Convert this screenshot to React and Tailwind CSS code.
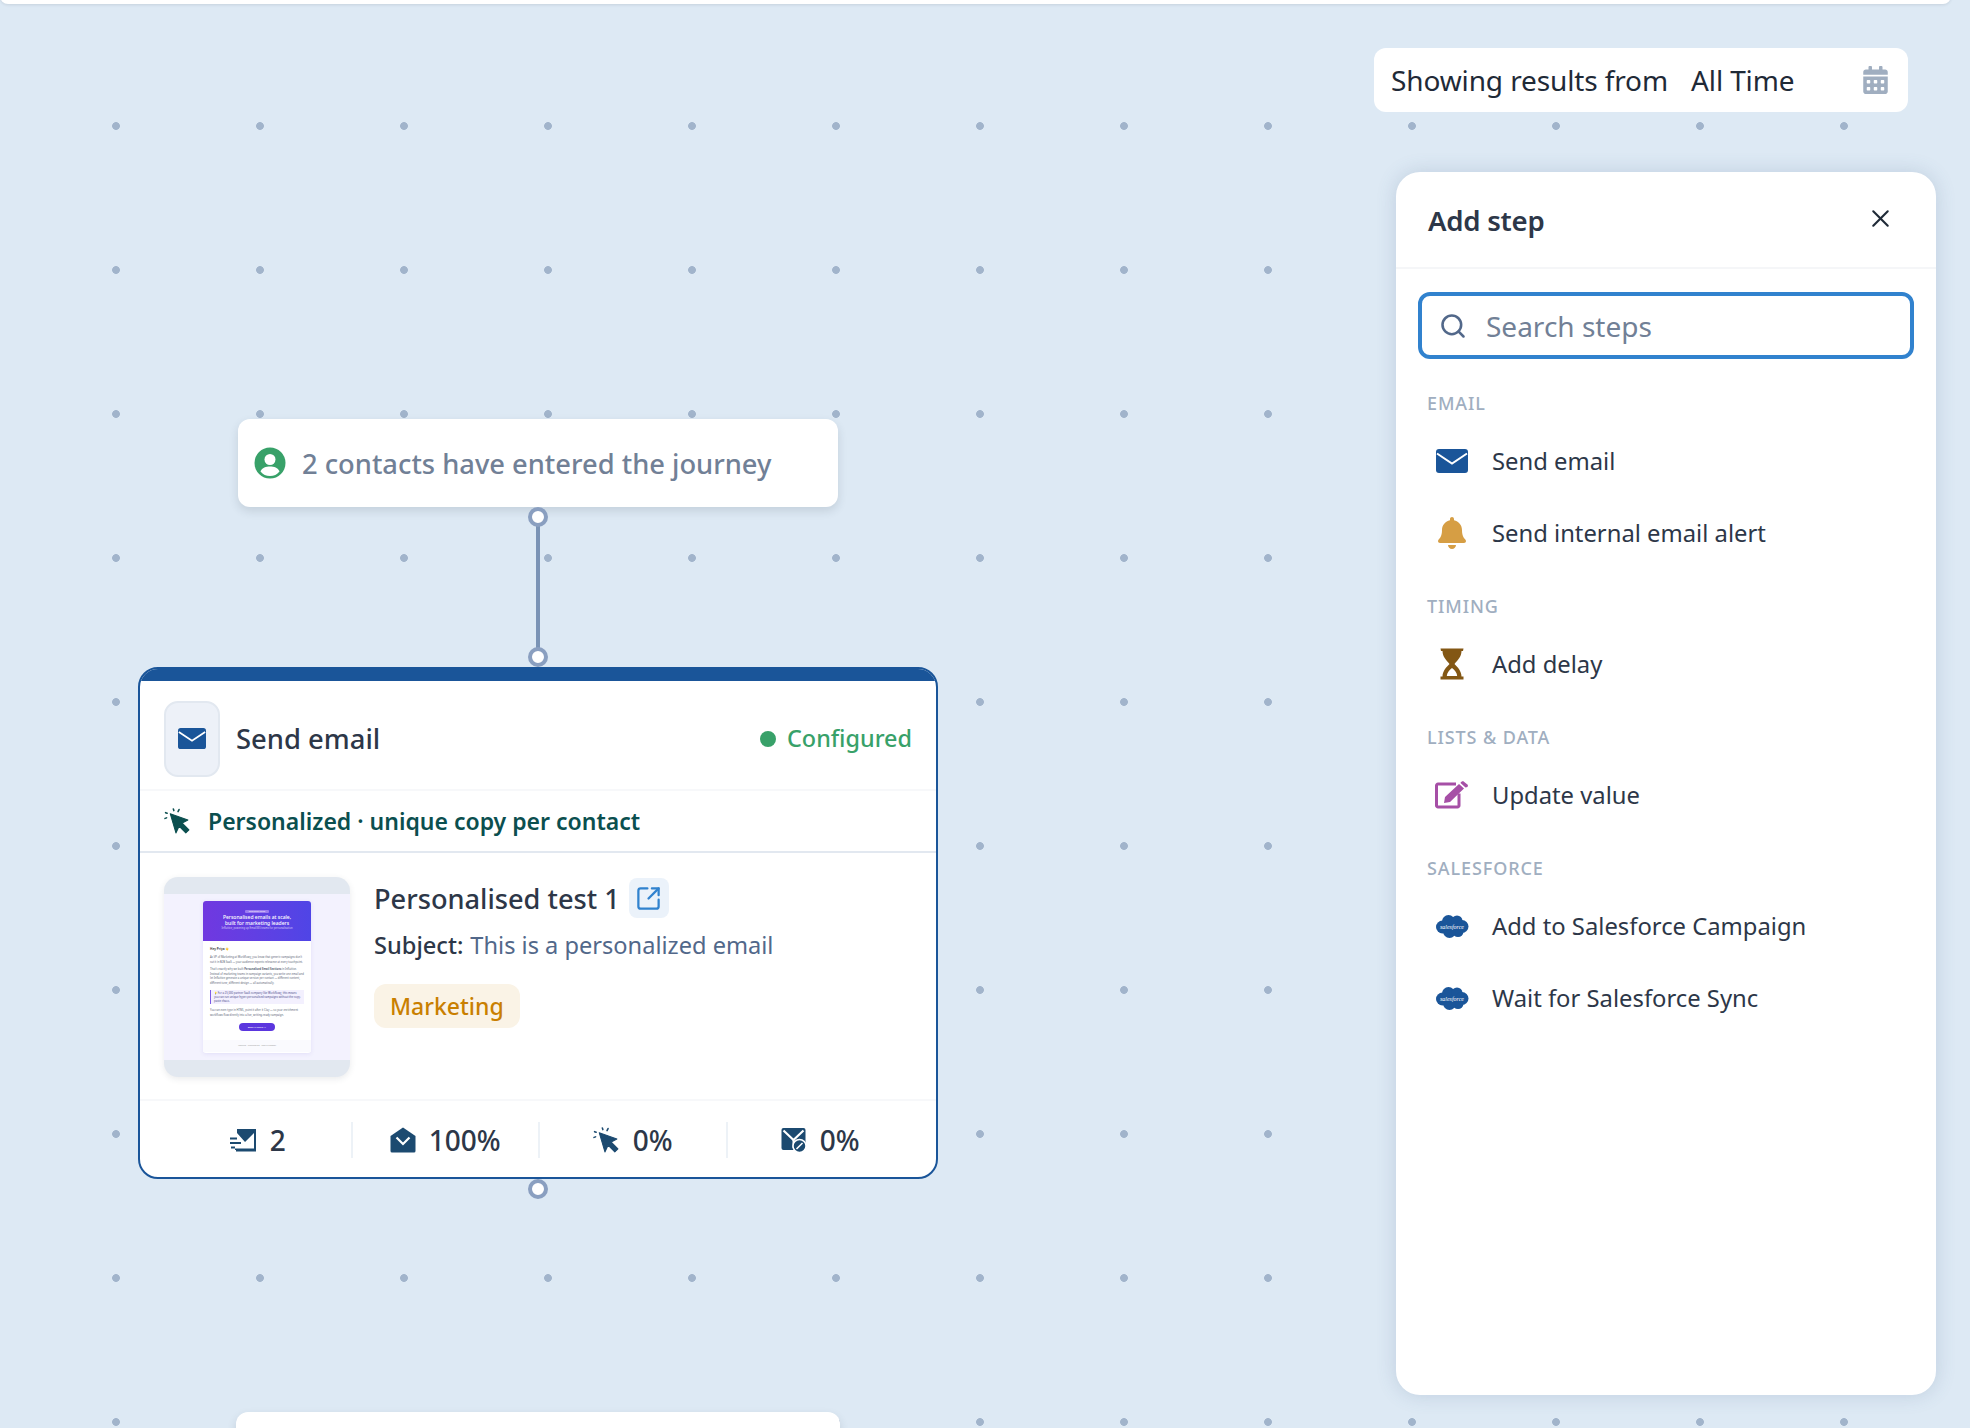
import React from "react";
import { FaCalendarAlt, FaBell } from "react-icons/fa";
import { Search, X, SquareArrowOutUpRight } from "lucide-react";

const Envelope = ({ className }) => (
  <svg viewBox="0 0 32 24" className={className}>
    <rect x="0" y="0" width="32" height="24" rx="3" fill="#1a5599" />
    <path d="M1 4.5 L16 14.5 L31 4.5" fill="none" stroke="#fff" strokeWidth="2" />
  </svg>
);

const Hourglass = ({ className }) => (
  <svg viewBox="0 0 24 32" className={className}>
    <path d="M0.5 0.5 H23.5 L23 3 L21.5 3 C21.5 9 17.5 12 14.5 16 C17.5 19 21.5 23 21.5 28.5 L23.5 28.5 V31.5 H0.5 V28.5 L2.5 28.5 C2.5 23 6.5 19 9.5 16 C6.5 12 2.5 9 2.5 3 L1 3 Z M12 20 C9 22 7 25 6.8 28 H17.2 C17 25 15 22 12 20 Z" fill="#835714" fillRule="evenodd" />
  </svg>
);

const EditIcon = ({ className }) => (
  <svg viewBox="0 0 34 28" className={className}>
    <path d="M24 13 V25 a1.5 1.5 0 0 1 -1.5 1.5 H3 A1.5 1.5 0 0 1 1.5 25 V5 A1.5 1.5 0 0 1 3 3.5 H21" fill="none" stroke="#a64fa6" strokeWidth="3" strokeLinejoin="round" transform="translate(0 -0.5)" />
    <path d="M9 22 L10 16 L24 3 L29 7.5 L15 21 Z M26 1 L28 0 L33 4 L32.5 6 L30.5 6.5 L25.5 2 Z" fill="#a64fa6" />
  </svg>
);

const Cloud = ({ className }) => (
  <svg viewBox="0 0 34 25" className={className}>
    <g fill="#1a5599">
      <rect x="6" y="7" width="22" height="12" />
      <circle cx="7.5" cy="13" r="6.5" />
      <circle cx="13.5" cy="7.5" r="6.5" />
      <circle cx="22" cy="7" r="5.5" />
      <circle cx="27" cy="12.5" r="6.5" />
      <circle cx="23" cy="17.5" r="5.5" />
      <circle cx="14.5" cy="17.5" r="6.5" />
    </g>
    <text x="17" y="14.5" textAnchor="middle" fontSize="6.5" fontStyle="italic" fill="#fff" fontFamily="'Liberation Serif', serif" textLength="24" lengthAdjust="spacingAndGlyphs">salesforce</text>
  </svg>
);

const UserCircle = ({ className }) => (
  <svg viewBox="0 0 32 32" className={className}>
    <circle cx="16" cy="16" r="15.5" fill="#38a169" />
    <circle cx="16" cy="12.5" r="5.5" fill="#fff" />
    <path d="M6.5 24.5 C8 20.5 12 19.5 16 19.5 C20 19.5 24 20.5 25.5 24.5 C23 27.5 20 29 16 29 C12 29 9 27.5 6.5 24.5 Z" fill="#fff" />
  </svg>
);

const CursorClick = ({ color, className }) => (
  <svg viewBox="0 0 26 26" className={className}>
    <path d="M6 5.5 L23 11.5 L17.5 14.5 L24 21 L21 24 L14.5 17.5 L11.5 24 Z" fill={color} stroke={color} strokeWidth="1" strokeLinejoin="round" />
    <g stroke={color} strokeWidth="1.5" strokeLinecap="round">
      <path d="M9.5 2.5 L9 1" />
      <path d="M13.5 3.5 L14.5 1.5" />
      <path d="M3 5 L1.5 4.5" />
      <path d="M2.5 9.5 L1 10" />
    </g>
  </svg>
);

const SentIcon = ({ className }) => (
  <svg viewBox="0 0 27 25" className={className}>
    <path d="M5 1 H26 V22 H5 V20.5 H24 V5 L15 14 L7 5 V1 Z" fill="#1c4a70" />
    <path d="M0 10.5 H7 M0 15 H11 M1 19.5 H5" stroke="#1c4a70" strokeWidth="2" />
    <path d="M6 22.5 H26" stroke="#1c4a70" strokeWidth="2" />
  </svg>
);

const OpenedIcon = ({ className }) => (
  <svg viewBox="0 0 26 26" className={className}>
    <path d="M13 0.5 L25.5 9 V24 a1.5 1.5 0 0 1 -1.5 1.5 H2 a1.5 1.5 0 0 1 -1.5 -1.5 V9 Z" fill="#1c4a70" />
    <path d="M6.5 10.5 L13 17 L19.5 10.5" fill="none" stroke="#fff" strokeWidth="2.2" />
  </svg>
);

const BouncedIcon = ({ className }) => (
  <svg viewBox="0 0 26 26" className={className}>
    <rect x="0.5" y="1" width="24" height="22" rx="2" fill="#1c4a70" />
    <path d="M2.5 3.5 L12.5 13 L22.5 3.5" fill="none" stroke="#fff" strokeWidth="2.2" />
    <path d="M12.5 13 V21" stroke="#fff" strokeWidth="2" />
    <circle cx="18.5" cy="19" r="6.5" fill="#1c4a70" stroke="#fff" strokeWidth="1.5" />
    <path d="M15.5 22 L21.5 16" stroke="#fff" strokeWidth="1.6" />
  </svg>
);

const Handle = ({ className }) => (
  <div className={`absolute w-5 h-5 rounded-full bg-white border-4 border-[#8a9fc0] ${className}`} />
);

const Section = ({ title, first, children }) => (
  <div className={first ? "" : "mt-[26px]"}>
    <div className="h-6 mb-[9px] pb-[2px] flex items-center text-[18px] font-medium tracking-[0.9px] text-[#a0aec0] -ml-px">{title}</div>
    {children}
  </div>
);

const Row = ({ icon, label }) => (
  <div className="h-[72px] flex items-center pl-[7px] gap-[23px] text-[23.8px] text-[#2d3748]">
    <div className="w-[34px] flex items-center justify-center">{icon}</div>
    <span className="pt-[2px]">{label}</span>
  </div>
);

const Stat = ({ icon, value, last }) => (
  <div className={`flex-1 h-[36px] flex items-center justify-center gap-[13px] text-[28px] font-medium text-[#2d3748] ${last ? "" : "border-r-2 border-[#edf2f7]"}`}>
    {icon}
    <span>{value}</span>
  </div>
);

const Thumb = () => (
  <div className="w-[186px] h-[200px] shrink-0 rounded-[14px] overflow-hidden bg-[#e2e8f0] shadow-[0_2px_6px_rgba(45,55,72,0.1)] py-[17px]">
    <div className="h-full bg-[#f3f2fe] flex justify-center pt-[7px]">
      <div className="w-[108px] h-[152px] bg-white rounded-[3px] overflow-hidden shadow-[0_1px_4px_rgba(80,60,200,0.1)] text-[2.7px] leading-[4.5px] text-[#5a6475]">
        <div className="h-10 bg-gradient-to-r from-[#7038e0] to-[#4f45e6] flex flex-col items-center pt-[9px] text-white">
          <div className="text-[2px] leading-[3px] bg-[#9b7cf0] px-1 rounded-[1px] mb-[1px]">Case study inside</div>
          <div className="text-[5px] leading-[6px] font-medium text-center whitespace-nowrap">Personalised emails at scale,<br />built for marketing leaders</div>
          <div className="text-[2.6px] leading-[5px] text-[#d9d0fb] whitespace-nowrap">Influitive, powering up Email365 teams for personalisation</div>
        </div>
        <div className="px-[7px] pt-[6px]">
          <div className="text-[3.2px] font-semibold text-[#333] mb-[3.5px]">Hey Priya 👋</div>
          <div className="mb-[3px]">As VP of Marketing at Workflowy, you know that generic campaigns don't cut it in B2B SaaS — your audience expects relevance at every touchpoint.</div>
          <div className="whitespace-nowrap overflow-hidden">That's exactly why we built <b>Personalised Email Sections</b> in Influitive.</div>
          <div className="mb-[5px]">Instead of marketing teams in campaign variants, you write one email and let Influitive generate a unique version per contact — different content, different tone, different design — all automatically.</div>
          <div className="border-l border-[#7c5ce6] bg-[#f3f0fe] px-[3px] py-[1px] mb-[4px] leading-[4px] text-[#4a4a8a]">💡 For a £5,000 partner SaaS company like Workflowy, this means you can run unique hyper-personalised campaigns without the copy-paste chaos.</div>
          <div className="mb-[6px]">You can even type in HTML, point it after it Clay — so your enrichment workflows flow directly into a live, writing-ready campaign.</div>
          <div className="mx-auto w-[36px] h-[8px] rounded-full bg-[#5b36de] text-white text-[2.5px] leading-[8px] text-center">Book a demo →</div>
        </div>
        <div className="mt-[9px] h-[12px] bg-[#fafafe] flex items-center justify-center text-[2px] text-[#999]">Influitive · Unsubscribe · View in browser</div>
      </div>
    </div>
  </div>
);

export default function App() {
  return (
    <div className="relative w-[1970px] h-[1428px] overflow-hidden bg-[#dde9f4] bg-[radial-gradient(circle,#a1b4cb_3.5px,transparent_4.3px)] bg-[size:144px_144px] bg-[position:44px_54px] font-['Noto_Sans',sans-serif]">
      {/* top bar */}
      <div className="absolute left-0 top-[-20px] w-[1951px] h-6 bg-white rounded-b-lg shadow-[0_1px_3px_rgba(45,55,72,0.12)]" />

      {/* date range */}
      <div className="absolute left-[1374px] top-12 w-[534px] h-16 bg-white rounded-xl flex items-center pl-[17px] pr-[20px] text-[28px] tracking-[-0.12px] text-[#1f2a37]">
        <span>Showing results from</span>
        <span className="ml-[23px]">All Time</span>
        <FaCalendarAlt className="ml-auto w-[25px] h-7 text-[#a0aec0]" />
      </div>

      {/* add-step panel */}
      <div className="absolute left-[1396px] top-[172px] w-[540px] h-[1223px] bg-white rounded-[24px] shadow-[0_0_20px_rgba(70,100,140,0.2)]">
        <div className="h-[97px] border-b-2 border-[#f5f6f8] pl-8 pr-[41px] flex items-center justify-between">
          <span className="text-[27.6px] font-semibold text-[#2d3748] tracking-[-0.25px] pt-[2px]">Add step</span>
          <X className="w-[29px] h-[29px] text-[#1f2a37] mb-[2px]" strokeWidth={1.7} />
        </div>
        <div className="mt-[23px] mx-[22px] h-[67px] rounded-xl border-4 border-[#3182ce] flex items-center pl-[17px] gap-[19px]">
          <Search className="w-[28px] h-[28px] text-[#52688a]" strokeWidth={2.2} />
          <span className="text-[28px] text-[#718096]">Search steps</span>
        </div>
        <div className="mt-[33px] px-8">
          <Section title="EMAIL" first>
            <Row icon={<Envelope className="w-8 h-6" />} label="Send email" />
            <Row icon={<FaBell className="w-7 h-8 text-[#d69e44]" />} label="Send internal email alert" />
          </Section>
          <Section title="TIMING">
            <Row icon={<Hourglass className="w-6 h-8" />} label="Add delay" />
          </Section>
          <Section title="LISTS & DATA">
            <Row icon={<EditIcon className="w-[34px] h-7" />} label="Update value" />
          </Section>
          <Section title="SALESFORCE">
            <Row icon={<Cloud className="w-[34px] h-[25px]" />} label="Add to Salesforce Campaign" />
            <Row icon={<Cloud className="w-[34px] h-[25px]" />} label="Wait for Salesforce Sync" />
          </Section>
        </div>
      </div>

      {/* entry node */}
      <div className="absolute left-[238px] top-[419px] w-[600px] h-[88px] bg-white rounded-xl shadow-[0_4px_10px_rgba(45,55,72,0.14)] flex items-center pl-4 gap-4 text-[27.3px] font-medium text-[#718096]">
        <UserCircle className="w-8 h-8 shrink-0" />
        <span className="pt-[2px]">2 contacts have entered the journey</span>
      </div>

      {/* connector */}
      <div className="absolute left-[536px] top-[520px] w-1 h-[135px] bg-[#7a93b5]" />
      <Handle className="left-[528px] top-[507px]" />
      <Handle className="left-[528px] top-[647px] z-10" />

      {/* send email node */}
      <div className="absolute left-[138px] top-[667px] w-[800px] h-[512px] bg-white rounded-[20px] border-2 border-[#1a5599] overflow-hidden flex flex-col">
        <div className="h-3 bg-[#1a5599] shrink-0" />
        <div className="h-[110px] shrink-0 border-b-2 border-[#f7f8fa] flex items-center pt-2 pl-6 pr-6">
          <div className="w-[56px] h-[76px] rounded-[14px] bg-[#edf1f8] border-2 border-[#e2e8f0] flex items-center justify-center pb-[2px]">
            <Envelope className="w-7 h-[21px]" />
          </div>
          <span className="ml-4 text-[27.4px] font-medium text-[#2d3748]">Send email</span>
          <span className="ml-auto w-4 h-4 rounded-full bg-[#38a169]" />
          <span className="ml-[11px] text-[23.4px] font-medium text-[#38a169]">Configured</span>
        </div>
        <div className="h-[62px] shrink-0 border-b-2 border-[#e2e8f0] flex items-center pl-6 gap-[17px] text-[23px] font-semibold text-[#0b4f4f]">
          <CursorClick color="#0b4f4f" className="w-[27px] h-[27px]" />
          <span>Personalized · unique copy per contact</span>
        </div>
        <div className="flex-1 flex pl-6 pt-[24px] border-b-2 border-[#f7f8fa]">
          <Thumb />
          <div className="ml-6 pt-px">
            <div className="h-10 flex items-center gap-[9px]">
              <span className="text-[27.2px] font-medium text-[#2d3748] pt-[2px]">Personalised test 1</span>
              <div className="w-10 h-10 rounded-lg bg-[#ebf2fa] flex items-center justify-center">
                <SquareArrowOutUpRight className="w-[27px] h-[27px] text-[#3182ce]" strokeWidth={2} />
              </div>
            </div>
            <div className="mt-2 h-[40px] flex items-center text-[23.6px] text-[#52688a]">
              <span className="font-medium text-[#2d3748] mr-[7px]">Subject:</span>
              <span>This is a personalized email</span>
            </div>
            <div className="mt-[18px] inline-flex items-center h-[44px] px-4 rounded-xl bg-[#faf3e6] text-[23px] font-medium text-[#c97f00]">Marketing</div>
          </div>
        </div>
        <div className="h-[76px] shrink-0 flex items-center pt-[2px] pl-[25px] pr-[23px]">
          <Stat icon={<SentIcon className="w-[27px] h-[25px]" />} value="2" />
          <Stat icon={<OpenedIcon className="w-[26px] h-[26px]" />} value="100%" />
          <Stat icon={<CursorClick color="#1c4a70" className="w-[27px] h-[27px]" />} value="0%" />
          <Stat icon={<BouncedIcon className="w-[26px] h-[26px]" />} value="0%" last />
        </div>
      </div>
      <Handle className="left-[528px] top-[1179px]" />

      {/* next node, cut off by the viewport */}
      <div className="absolute left-[236px] top-[1412px] w-[604px] h-[88px] bg-white rounded-xl shadow-[0_4px_10px_rgba(45,55,72,0.14)]" />
    </div>
  );
}
